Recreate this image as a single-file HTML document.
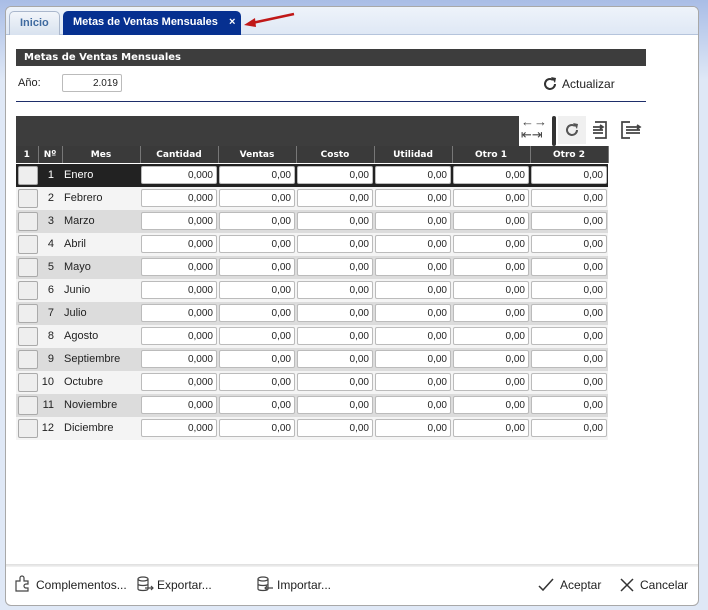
<!DOCTYPE html>
<html><head><meta charset="utf-8"><style>
*{box-sizing:border-box;margin:0;padding:0}
body{width:708px;height:610px;overflow:hidden;background:linear-gradient(#a9bde6,#dfe8f6 80px,#dfe8f6);font-family:"Liberation Sans","DejaVu Sans",sans-serif;font-size:11px;color:#222;position:relative}
.frame{position:absolute;left:5px;top:6px;width:694px;height:600px;background:#fff;border:1px solid #a8a8a8;border-radius:6px;overflow:hidden}
.strip{position:absolute;left:0;top:0;right:0;height:28px;background:linear-gradient(#eef3fa,#dfe8f5);border-bottom:1px solid #b5c4dc}
.tab{position:absolute;top:4px;height:24px;border-radius:5px 5px 0 0;font-weight:bold;font-size:11px;line-height:22px;padding-left:10px}
.a{position:absolute}
.hdr{position:absolute;left:10px;top:42px;width:630px;height:17px;background:#3d3d3d;color:#fff;font-weight:bold;font-size:10px;line-height:17px;padding-left:8px;font-family:"DejaVu Sans",sans-serif}
table{position:absolute;left:10px;top:139px;border-collapse:collapse}
th{background:#3a3a3a;color:#fff;font-size:9px;font-weight:bold;height:17px;border-right:1px solid #777;padding:0;font-family:"DejaVu Sans",sans-serif}
.inp{height:18px;margin:0 1px;background:#fff;border:1px solid #bbb;border-radius:2px;text-align:right;padding-right:3px;padding-top:2px;line-height:14px;font-size:10px}
.cb{width:20px;height:19px;margin-left:1px;border:1px solid #aaa;border-radius:2px;background:#eee}
.b{position:absolute;top:570px;font-size:12px;color:#222;line-height:16px}
</style></head><body>
<div class="frame">
<div class="strip"></div>
<div class="tab" style="left:3px;width:51px;background:linear-gradient(#f2f5fa,#d8e2ef);border:1px solid #aab7cc;border-bottom:none;color:#3f6aa0">Inicio</div>
<div class="tab" style="left:57px;width:178px;background:#063090;color:#fff">Metas de Ventas Mensuales<span style="position:absolute;left:166px">×</span></div>
<svg class="a" style="left:236px;top:3px" width="55" height="20"><line x1="52" y1="4" x2="10" y2="13" stroke="#c01818" stroke-width="2.5"/><polygon points="2,15 13,8 14,17" fill="#c01818"/></svg>
<div class="hdr">Metas de Ventas Mensuales</div>
<div class="a" style="left:12px;top:70px">Año:</div>
<div class="a inp" style="left:56px;top:67px;width:60px;height:18px;margin:0">2.019</div>
<svg class="a" style="left:536px;top:69px" width="16" height="16" viewBox="0 0 16 16"><path d="M13 8a5 5 0 1 1-2-4" fill="none" stroke="#333" stroke-width="2"/><polygon points="9,1 14,2 13,7" fill="#333"/></svg>
<div class="a" style="left:556px;top:70px;font-size:12px">Actualizar</div>
<div class="a" style="left:10px;top:94px;width:630px;height:1px;background:#1e2e6a"></div>
<div class="a" style="left:10px;top:109px;width:503px;height:30px;background:#3d3d3d"></div>
<div class="a" style="left:515px;top:108px;font-size:13px;line-height:13px;color:#444">←→<br>⇤⇥</div>
<div class="a" style="left:546px;top:109px;width:4px;height:30px;background:#333;border-radius:2px"></div>
<div class="a" style="left:552px;top:109px;width:28px;height:28px;background:#f0f0f0"></div>
<svg class="a" style="left:558px;top:115px" width="16" height="16" viewBox="0 0 16 16"><path d="M13 8a5 5 0 1 1-2-4" fill="none" stroke="#555" stroke-width="2"/><polygon points="9,1 14,2 13,7" fill="#555"/></svg>
<svg class="a" style="left:586px;top:113px" width="18" height="20" viewBox="0 0 18 20"><path d="M3 2h11v16H3M1 7h10M1 10h10M1 13h10M8 5l3 2-3 2" fill="none" stroke="#444" stroke-width="1.7"/></svg>
<svg class="a" style="left:614px;top:113px" width="22" height="20" viewBox="0 0 22 20"><path d="M10 2H2v16h8M6 7h14M6 10h14M6 13h14M17 5l3 2-3 2" fill="none" stroke="#444" stroke-width="1.7"/></svg>
<table>
<tr><th style="width:22px">1</th><th style="width:24px">Nº</th><th style="width:78px">Mes</th><th style="width:78px">Cantidad</th><th style="width:78px">Ventas</th><th style="width:78px">Costo</th><th style="width:78px">Utilidad</th><th style="width:78px">Otro 1</th><th style="width:78px">Otro 2</th></tr>
</table>
<div id="rows"></div>
<div class="a" style="left:0;top:557px;width:694px;height:3px;background:linear-gradient(#ddd,#f4f4f4)"></div>
<svg class="a" style="left:8px;top:568px" width="18" height="18" viewBox="0 0 18 18"><path d="M2 16V6h4V3a2 2 0 0 1 4 0v3h4v3h-2a2 2 0 0 0 0 4h2v3z" fill="none" stroke="#444" stroke-width="1.2"/></svg>
<div class="b" style="left:30px">Complementos...</div>
<svg class="a" style="left:130px;top:568px" width="18" height="18" viewBox="0 0 18 18"><ellipse cx="7" cy="4" rx="5" ry="2" fill="none" stroke="#444" stroke-width="1.2"/><path d="M2 4v10c0 2 10 2 10 0V4M2 9c0 2 10 2 10 0M9 13h8M15 11l2 2-2 2" fill="none" stroke="#444" stroke-width="1.2"/></svg>
<div class="b" style="left:151px">Exportar...</div>
<svg class="a" style="left:250px;top:568px" width="18" height="18" viewBox="0 0 18 18"><ellipse cx="7" cy="4" rx="5" ry="2" fill="none" stroke="#444" stroke-width="1.2"/><path d="M2 4v10c0 2 10 2 10 0V4M2 9c0 2 10 2 10 0M17 13H9M11 11l-2 2 2 2" fill="none" stroke="#444" stroke-width="1.2"/></svg>
<div class="b" style="left:271px">Importar...</div>
<svg class="a" style="left:532px;top:570px" width="16" height="16" viewBox="0 0 16 16"><path d="M1 9l4 4 10-11" fill="none" stroke="#333" stroke-width="1.5"/></svg>
<div class="b" style="left:554px">Aceptar</div>
<svg class="a" style="left:613px;top:570px" width="16" height="16" viewBox="0 0 16 16"><path d="M2 2l12 12M14 2L2 14" fill="none" stroke="#333" stroke-width="1.5"/></svg>
<div class="b" style="left:634px">Cancelar</div>
</div>
<script>
var m=["Enero","Febrero","Marzo","Abril","Mayo","Junio","Julio","Agosto","Septiembre","Octubre","Noviembre","Diciembre"],h="";
for(var i=0;i<12;i++){var bg=i==0?"#222":(i%2?"#f4f4f4":"#dcdcdc"),c=i==0?"#fff":"#222";
h+='<div style="position:absolute;left:10px;top:'+(157+i*23)+'px;width:592px;height:23px;background:'+bg+';color:'+c+'">';
h+='<div class="cb" style="position:absolute;left:1px;top:2px"></div><div style="position:absolute;left:22px;width:16px;text-align:right;top:5px">'+(i+1)+'</div><div style="position:absolute;left:48px;top:5px">'+m[i]+'</div>';
for(var j=0;j<6;j++){h+='<div class="inp" style="position:absolute;left:'+(124+j*78)+'px;top:2px;width:76px;color:#222">'+(j==0?"0,000":"0,00")+'</div>';}
h+='</div>';}
document.getElementById("rows").innerHTML=h;
</script>
</body></html>
